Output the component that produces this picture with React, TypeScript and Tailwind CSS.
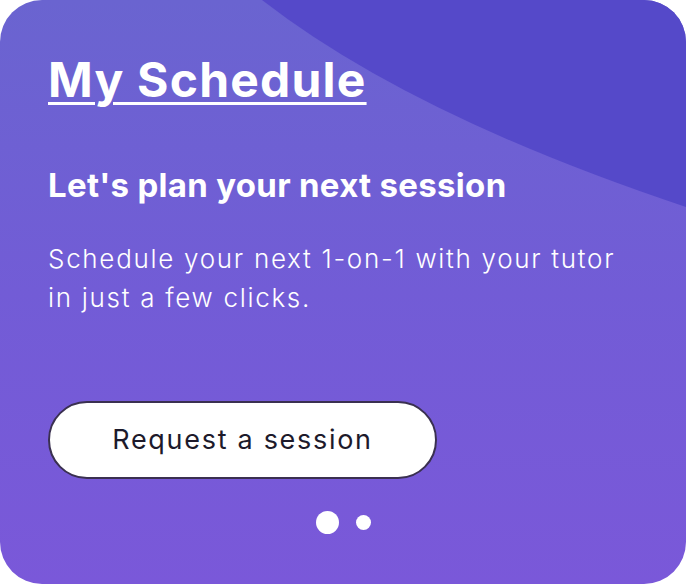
export default function App() {
  return (
    <div className="w-[686px] h-[584px] bg-white" style={{ fontFamily: 'Inter, "Noto Sans", sans-serif' }}>
      <div className="relative w-full h-full rounded-[42px] overflow-hidden bg-gradient-to-b from-[#6a64d0] via-[#725cd6] to-[#7a58d9]">
        {/* dark swoosh in the top right */}
        <svg className="absolute inset-0" width="686" height="584" viewBox="0 0 686 584">
          <path d="M262 0 Q 410 115 686 207 L686 0 Z" fill="#5549c9" />
        </svg>

        <div className="relative flex flex-col pl-12 pt-[52px]">
          <h1 className="text-[48px] leading-[56px] font-bold tracking-[1.2px] text-white underline decoration-[3px] underline-offset-[5px] w-fit">
            My Schedule
          </h1>
          <h2 className="mt-[57px] text-[33px] leading-[40px] font-bold tracking-[0.3px] text-white">
            Let's plan your next session
          </h2>
          <p className="mt-[34px] text-[26px] leading-[39px] font-light tracking-[1.7px] text-white whitespace-nowrap">
            Schedule your next 1-on-1 with your tutor
            <br />
            in just a few clicks.
          </p>
          <button className="mt-[84px] w-[389px] h-[78px] rounded-full bg-white border-2 border-[#3a3050] text-[27px] tracking-[1.7px] text-[#1d1a2b] font-normal">
            Request a session
          </button>
          <div className="flex items-center justify-center gap-[17px] mt-[32px] w-[590px] h-[23px]">
            <span className="w-[23px] h-[23px] rounded-full bg-white" />
            <span className="w-[15px] h-[15px] rounded-full bg-white" />
          </div>
        </div>
      </div>
    </div>
  );
}
